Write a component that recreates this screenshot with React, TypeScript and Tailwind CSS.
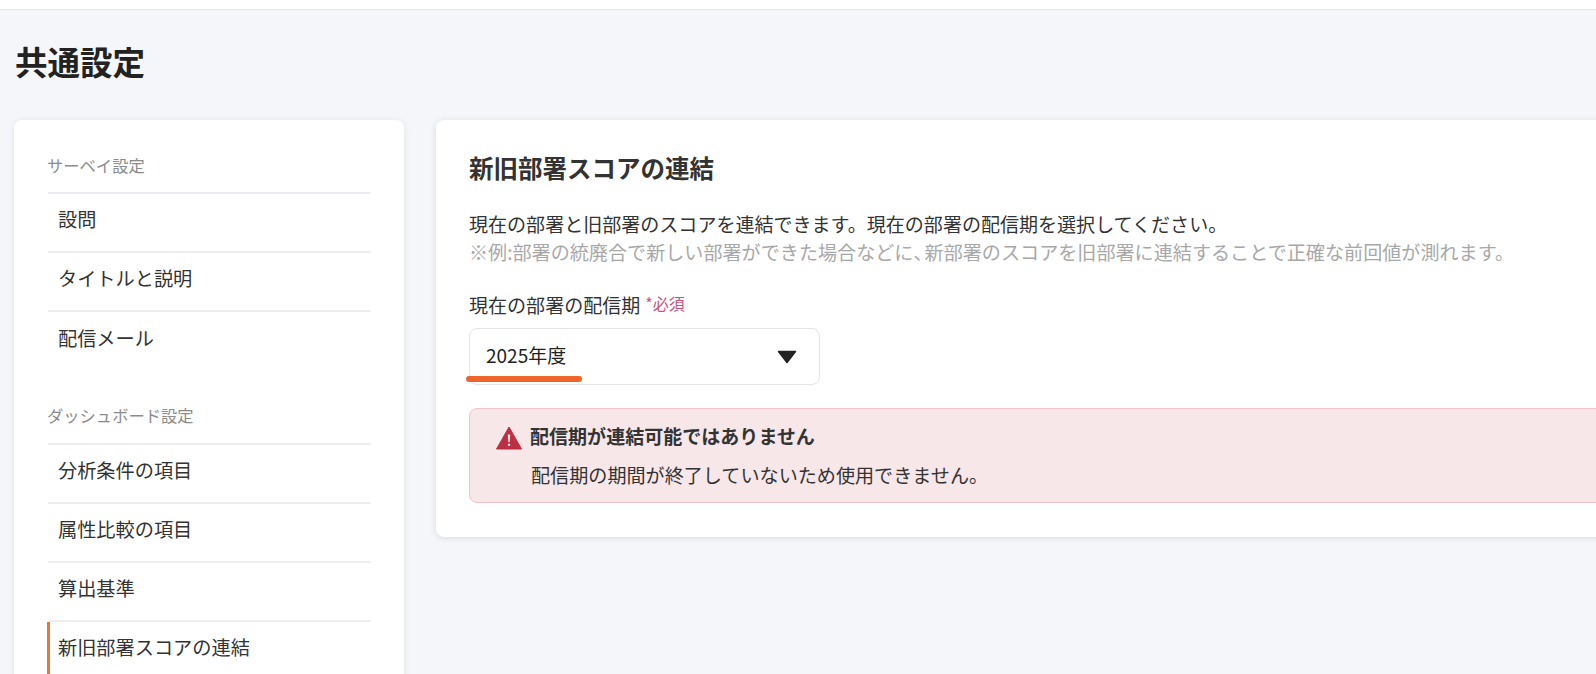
const font = { fontFamily: '"Noto Sans CJK JP", "Noto Sans", sans-serif' }

const SideItem = ({ label, active }: { label: string; active?: boolean }) => {
    return (
        <li className="border-t-2 border-[#eeeef2] h-[59.2px]">
            <div
                className={`h-full pb-[6px] flex items-center text-[19.2px] text-[#333333] ${
                    active
                        ? "-ml-px border-l-[3px] border-[#e07b39] pl-[8px]"
                        : "pl-[10px]"
                }`}
            >
                {label}
            </div>
        </li>
    )
}

const SideGroup = ({
    title,
    items,
    activeItem,
}: {
    title: string
    items: string[]
    activeItem?: string
}) => {
    return (
        <div>
            <p className="h-[46px] mb-[4px] flex items-center text-[16.3px] text-[#8b8b8b]">
                {title}
            </p>
            <ul className="ml-px">
                {items.map((item) => (
                    <SideItem
                        key={item}
                        label={item}
                        active={item === activeItem}
                    />
                ))}
            </ul>
        </div>
    )
}

const App = () => {
    return (
        <div
            className="h-[674px] w-[1596px] overflow-hidden bg-[#f5f6fa]"
            style={font}
        >
            <div className="h-[10px] bg-white border-b border-[#e4e4e8]" />
            <h1 className="pl-[15px] h-[110px] pt-[25px] text-[32.5px] leading-[52px] font-bold text-[#222222]">
                共通設定
            </h1>
            <div className="flex gap-[32px] pl-[14px] items-start">
                <aside className="w-[390px] h-[600px] shrink-0 bg-white rounded-lg shadow-[0_1px_6px_rgba(40,50,80,0.1)] pl-[33px] pr-[33px] pt-[22px]">
                    <div className="flex flex-col gap-[23px]">
                        <SideGroup
                            title="サーベイ設定"
                            items={["設問", "タイトルと説明", "配信メール"]}
                        />
                        <SideGroup
                            title="ダッシュボード設定"
                            items={[
                                "分析条件の項目",
                                "属性比較の項目",
                                "算出基準",
                                "新旧部署スコアの連結",
                            ]}
                            activeItem="新旧部署スコアの連結"
                        />
                    </div>
                </aside>
                <main className="w-[1300px] h-[417px] shrink-0 bg-white rounded-lg shadow-[0_1px_6px_rgba(40,50,80,0.14)] pl-[33px] pt-[29px]">
                    <h2 className="text-[24.5px] leading-[38px] font-bold text-[#333333]">
                        新旧部署スコアの連結
                    </h2>
                    <p className="mt-[23px] text-[19.05px] leading-[28px] text-[#333333]">
                        現在の部署と旧部署のスコアを連結できます。現在の部署の配信期を選択してください。
                    </p>
                    <p className="text-[19.1px] leading-[28px] text-[#a8a8a8]">
                        ※例:部署の統廃合で新しい部署ができた場合などに
                        <span className="tracking-[-8px]">、</span>
                        新部署のスコアを旧部署に連結することで正確な前回値が測れます。
                    </p>
                    <div className="mt-[25px] flex items-center h-[28px] text-[#333333] text-[19.05px]">
                        現在の部署の配信期
                        <span className="ml-[5px] -mt-[4px] text-[16px] text-[#c9557f]">
                            *必須
                        </span>
                    </div>
                    <div className="relative mt-[9px] w-[351px] h-[57px] border border-[#e4e4ea] rounded-lg flex items-center justify-between pl-[16px] pr-[22px] pb-[2px] text-[19px] text-[#222222]">
                        2025年度
                        <svg width="20" height="14" viewBox="0 0 20 14" className="mt-[2px]">
                            <path
                                d="M1.5 1.5 H18.5 L10 12.5 Z"
                                fill="#222222"
                                stroke="#222222"
                                strokeWidth="1.5"
                                strokeLinejoin="round"
                            />
                        </svg>
                        <span className="absolute left-[-4px] top-[47px] w-[116px] h-[6px] rounded-full bg-[#f0652b]" />
                    </div>
                    <div className="mt-[23px] mr-[-40px] h-[95px] border border-[#f1c3cb] rounded-lg bg-[#f7e7e9] pl-[26px] pt-[13px]">
                        <div className="flex items-center gap-[8px] h-[28px]">
                            <svg width="26" height="24" viewBox="0 0 26 24" className="mt-[3px]">
                                <path
                                    d="M13 1 L25.5 23 H0.5 Z"
                                    fill="#bd2f42"
                                    stroke="#bd2f42"
                                    strokeLinejoin="round"
                                />
                                <path
                                    d="M11.8 8.5 H14.2 L13.7 16 H12.3 Z"
                                    fill="#f7e7e9"
                                />
                                <circle cx="13" cy="18.8" r="1.3" fill="#f7e7e9" />
                            </svg>
                            <span className="text-[19.05px] font-bold text-[#333333]">
                                配信期が連結可能ではありません
                            </span>
                        </div>
                        <p className="mt-[11px] pl-[35px] text-[19.1px] leading-[28px] text-[#333333]">
                            配信期の期間が終了していないため使用できません。
                        </p>
                    </div>
                </main>
            </div>
        </div>
    )
}

export default App
